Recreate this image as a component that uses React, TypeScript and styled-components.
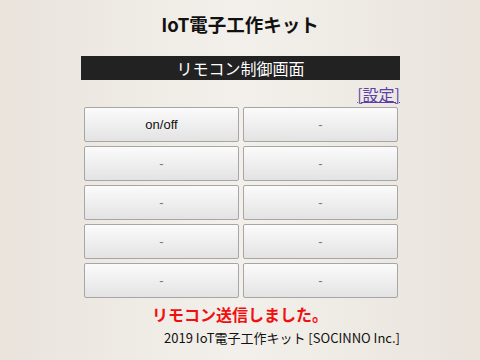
import React from "react";
import styled, { createGlobalStyle } from "styled-components";

const GlobalStyle = createGlobalStyle`
  html, body {
    margin: 0;
    height: 100%;
  }
  body {
    background: linear-gradient(to right, #e9e3dc 0%, #f3f0eb 50%, #e9e3dc 100%);
    font-family: "Noto Sans CJK JP", "Noto Sans", sans-serif;
  }
`;

const buttons = ["on/off", "-", "-", "-", "-", "-", "-", "-", "-", "-"];

const App = () => {
  return (
    <>
      <GlobalStyle />
      <Page>
        <Title>IoT電子工作キット</Title>
        <HeaderBar>リモコン制御画面</HeaderBar>
        <SettingsRow>
          <SettingsLink href="#">[設定]</SettingsLink>
        </SettingsRow>
        <ButtonGrid>
          {buttons.map((label, index) => (
            <RemoteButton key={index} $muted={label === "-"}>
              {label}
            </RemoteButton>
          ))}
        </ButtonGrid>
        <Message>リモコン送信しました。</Message>
        <Footer>2019 IoT電子工作キット [SOCINNO Inc.]</Footer>
      </Page>
    </>
  );
};

const Page = styled.div`
  width: 320px;
  margin: 0 auto;
  padding-top: 10px;
  display: flex;
  flex-direction: column;
`;

const Title = styled.h1`
  margin: 0;
  font-size: 18.5px;
  font-weight: bold;
  text-align: center;
  color: #111;
  line-height: 28px;
`;

const HeaderBar = styled.div`
  margin-top: 18px;
  margin-left: 1px;
  background: #222;
  color: #fff;
  font-size: 16px;
  line-height: 24px;
  text-align: center;
`;

const SettingsRow = styled.div`
  display: flex;
  justify-content: flex-end;
  height: 27px;
  align-items: center;
`;

const SettingsLink = styled.a`
  color: #5b3fa8;
  font-size: 16px;
  text-decoration: underline;
  text-decoration-thickness: 1px;
`;

const ButtonGrid = styled.div`
  display: grid;
  grid-template-columns: 155px 155px;
  column-gap: 4px;
  row-gap: 4px;
  padding: 0 3px 0 4px;
`;

const RemoteButton = styled.button<{ $muted: boolean }>`
  height: 35px;
  border: 1px solid #a6a6a6;
  border-radius: 2px;
  background: linear-gradient(to bottom, #fbfbfb 0%, #e3e3e3 100%);
  font-family: "Liberation Sans", Arial, sans-serif;
  font-size: 13px;
  color: ${(p) => (p.$muted ? "#777" : "#111")};
  padding: 0;
`;

const Message = styled.div`
  margin-top: 3px;
  text-align: center;
  color: #f01010;
  font-size: 16px;
  font-weight: bold;
  line-height: 26px;
`;

const Footer = styled.div`
  text-align: right;
  font-size: 13px;
  color: #111;
  line-height: 22px;
`;

export default App;
